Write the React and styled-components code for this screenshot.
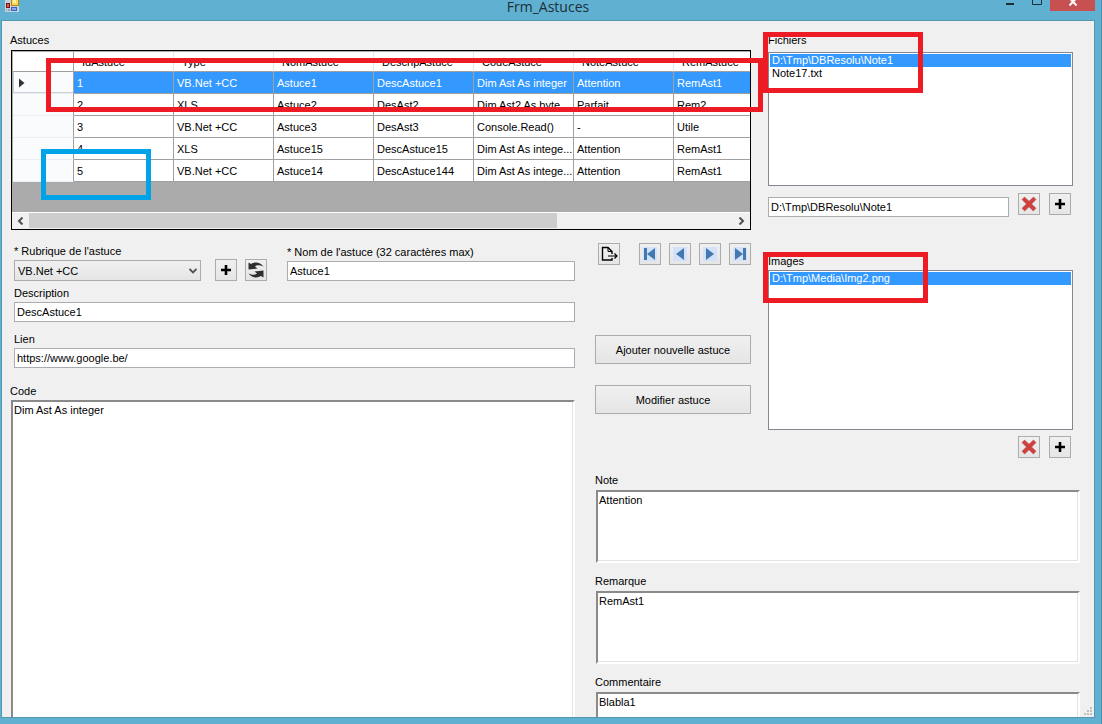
import React, { useState } from "react";
import styled, { createGlobalStyle } from "styled-components";

const GlobalStyle = createGlobalStyle`
  * {
    box-sizing: border-box;
  }

  body {
    margin: 0;
    background: #60b1d1;
    color: #000;
    font-family: "Liberation Sans", Arial, sans-serif;
    font-size: 11px;
    line-height: 14px;
  }

  button, input, select, textarea {
    font: inherit;
    color: inherit;
    margin: 0;
    border-radius: 0;
    outline: none;
  }
`;

const Window = styled.div`
  display: flex;
  flex-direction: column;
  min-height: 100vh;
  padding: 0 6px 6px 1px;
  border-right: 1px solid #4b93b2;
  background: #60b1d1;
`;

const TitleBar = styled.header`
  display: grid;
  grid-template-columns: 1fr auto 1fr;
  height: 20px;

  > svg {
    margin-left: 4px;
  }
`;

const Title = styled.h1`
  margin: 0;
  font-family: "Open Sans", "Noto Sans", sans-serif;
  font-size: 14px;
  font-weight: 400;
  line-height: 14px;
  color: #1d2f38;
`;

const WindowButtons = styled.div`
  display: flex;
  justify-content: flex-end;
  align-items: flex-start;
`;

const WindowButton = styled.button`
  display: flex;
  justify-content: center;
  width: ${(props) => (props.$close ? 45 : 27)}px;
  height: 11px;
  padding: 0;
  border: 0;
  background: ${(props) => (props.$close ? "#c75050" : "transparent")};
`;

const Form = styled.main`
  position: relative;
  flex-grow: 1;
  display: grid;
  grid-template-columns: minmax(0, 1fr) 156px 312px;
  grid-template-rows: auto auto 1fr;
  grid-template-areas:
    "records records files"
    "editor actions images"
    "editor notes notes";
  column-gap: 17px;
  padding: 12px 14px 0 8px;
  border: 1px solid #5396b0;
  background: #f0f0f0;
`;

const Section = styled.section`
  grid-area: ${(props) => props.$area};
  position: relative;
  display: flex;
  flex-direction: column;
  min-width: 0;
  padding-top: ${(props) => props.$top || 0}px;
`;

const Caption = styled.h2`
  margin: 0 0 ${(props) => props.$gap}px;
  font-size: 11px;
  font-weight: 400;
  line-height: 14px;
`;

const GridBox = styled.div`
  margin-left: 1px;
  border: 1px solid #000;
  background: #ababab;
`;

const GridScroll = styled.div`
  height: 161px;
  padding: 1px 0 0 1px;
  overflow: hidden;
`;

const Table = styled.table`
  table-layout: fixed;
  width: 760px;
  border-collapse: separate;
  border-spacing: 0;
  background: #fff;
`;

const HeadCell = styled.th`
  width: ${(props) => props.$width}px;
  height: 20px;
  padding: 0 0 0 8px;
  border-right: 1px solid #e3e8f0;
  border-bottom: 1px solid #a0a0a0;
  font-weight: 400;
  text-align: left;

  &:first-child {
    border-right-color: #a0a0a0;
  }
`;

const RowHead = styled.th`
  height: 22px;
  padding: 0 6px;
  border-right: 1px solid #a0a0a0;
  border-bottom: 1px solid #e9edf4;
  background: #fafbfd;
  text-align: left;
  line-height: 0;
`;

const Cell = styled.td`
  height: 22px;
  padding: 0 0 0 3px;
  border-right: 1px solid #a0a0a0;
  border-bottom: 1px solid #a0a0a0;
  overflow: hidden;
  white-space: nowrap;
`;

const Row = styled.tr`
  ${Cell} {
    background: ${(props) => (props.$selected ? "#3399ff" : "#fff")};
    color: ${(props) => (props.$selected ? "#fff" : "#000")};
  }

  ${RowHead} {
    box-shadow: ${(props) => (props.$selected ? "inset 1px -1px #c9cdd6" : "none")};
  }
`;

const ScrollBar = styled.div`
  display: flex;
  height: 17px;
  border-top: 1px solid #fff;
  background: #f0f0f0;
`;

const ScrollArrow = styled.button`
  display: flex;
  align-items: center;
  justify-content: center;
  width: 17px;
  padding: 0;
  border: 0;
  background: none;
`;

const ScrollTrack = styled.div`
  flex-grow: 1;
`;

const ScrollThumb = styled.div`
  width: 75%;
  height: 15px;
  background: #cdcdcd;
`;

const EditorFields = styled.div`
  display: flex;
  flex-direction: column;
  padding: 14px 3px 16px 4px;
`;

const FieldRow = styled.div`
  display: flex;
  align-items: flex-end;
  margin-bottom: 5px;
`;

const Field = styled.div`
  display: flex;
  flex-direction: column;
  gap: 2px;
  flex-grow: ${(props) => (props.$grow ? 1 : 0)};
  width: ${(props) => (props.$width ? `${props.$width}px` : "auto")};
  min-width: 0;

  & + & {
    margin-top: 10px;
  }
`;

const Label = styled.label`
  line-height: 14px;
  white-space: nowrap;
`;

const TextInput = styled.input`
  width: 100%;
  min-width: 0;
  height: 20px;
  padding: 0 2px;
  border: 1px solid #abadb3;
  background: #fff;
`;

const SelectWrap = styled.div`
  position: relative;
`;

const Select = styled.select`
  appearance: none;
  display: block;
  width: 100%;
  height: 21px;
  padding: 0 20px 0 3px;
  border: 1px solid #acacac;
  background: linear-gradient(#f0f0f0, #e5e5e5);
`;

const SelectArrow = styled.svg`
  position: absolute;
  top: 8px;
  right: 4px;
  pointer-events: none;
`;

const Button = styled.button`
  height: 29px;
  padding: 0;
  border: 1px solid #acacac;
  background: linear-gradient(#f0f0f0, #e5e5e5);
`;

const IconButton = styled(Button)`
  flex-shrink: 0;
  display: flex;
  align-items: center;
  justify-content: center;
  width: 22px;
  height: 22px;
`;

const FieldButtons = styled.div`
  display: flex;
  gap: 8px;
  margin: 0 20px 0 14px;
`;

const TextArea = styled.textarea`
  display: block;
  width: 100%;
  height: 73px;
  padding: 1px;
  border: 2px solid;
  border-color: #8a8a8a #fff #fff #8a8a8a;
  box-shadow: inset -1px -1px #e3e3e3;
  background: #fff;
  resize: none;
`;

// Fills what is left of the form and runs under its bottom edge
const OpenTextArea = styled(TextArea)`
  flex: 1 1 23px;
  height: auto;
  min-height: 0;
  border-bottom: 0;
  box-shadow: inset -1px 0 #e3e3e3;
`;

const CodeField = styled.div`
  flex-grow: 1;
  display: flex;
  flex-direction: column;
  gap: 2px;
  padding-right: 3px;

  ${TextArea} {
    width: calc(100% - 1px);
    margin-left: 1px;
  }
`;

const Toolbar = styled.div`
  display: flex;
  justify-content: space-between;
  gap: 8px;
  padding: 13px 0 70px 3px;
`;

const NavButtons = styled.div`
  display: flex;
  gap: 8px;
`;

const ActionButtons = styled.div`
  display: flex;
  flex-direction: column;
  gap: 21px;
`;

const ListBox = styled.ul`
  width: calc(100% - 7px);
  height: ${(props) => props.$height}px;
  margin: 0;
  padding: 1px;
  border: 1px solid #828790;
  background: #fff;
  list-style: none;
`;

const ListItem = styled.li`
  height: 13px;
  padding: 0 2px;
  line-height: 13px;
  background: ${(props) => (props.$selected ? "#3399ff" : "transparent")};
  color: ${(props) => (props.$selected ? "#fff" : "#000")};
`;

const ListTools = styled.div`
  display: flex;
  justify-content: flex-end;
  gap: 9px;
  padding: ${(props) => props.$top}px 9px 0 0;

  ${TextInput} {
    margin-top: 4px;
  }
`;

const Notes = styled(Section)`
  gap: 11px;
`;

const NoteField = styled.div`
  display: flex;
  flex-direction: column;
  gap: 3px;
  flex-grow: ${(props) => (props.$open ? 1 : 0)};

  ${TextArea} {
    width: calc(100% - 1px);
    margin-left: 1px;
  }
`;

const Highlight = styled.div`
  position: absolute;
  z-index: 1;
  top: ${(props) => props.$top}px;
  left: ${(props) => props.$left}px;
  width: ${(props) => props.$width};
  height: ${(props) => props.$height}px;
  border: 5px solid ${(props) => props.$color || "#ed1c24"};
  pointer-events: none;
`;

const Grip = styled.svg`
  position: absolute;
  right: 2px;
  bottom: 2px;
`;

const AppIcon = () => (
  <svg width="14" height="12" viewBox="0 0 14 12">
    <rect width="14" height="12" fill="#c3d3da" />
    <rect x="6" width="8" height="6" fill="#b58a1c" />
    <rect x="7" width="6" height="5" fill="#ffd84f" />
    <rect x="8" width="3" height="3" fill="#fff0a6" />
    <rect x="1" y="3" width="4" height="5" fill="#7c1c1a" />
    <rect x="2" y="4" width="2" height="3" fill="#e0564c" />
    <rect x="6" y="7" width="6" height="4" fill="#3d62c4" />
    <rect x="7" y="8" width="4" height="2" fill="#87a8f0" />
    <path d="M1 9h1v2H1zM3 9h2v2H3z" fill="#8fa2ac" />
  </svg>
);

const PlusIcon = () => (
  <svg width="10" height="10" viewBox="0 0 10 10">
    <path d="M5 0v10M0 5h10" stroke="#000" strokeWidth="2.6" />
  </svg>
);

const DeleteIcon = () => (
  <svg width="16" height="16" viewBox="0 0 16 16">
    <path
      d="M1 3.5L3.5 1 8 5.2 12.5 1 15 3.5 10.6 8 15 12.3 12.3 15 8 10.8 3.7 15 1 12.3 5.4 8z"
      fill="#cf4040"
      stroke="#b93a3a"
      strokeWidth="0.5"
    />
  </svg>
);

const RefreshIcon = () => (
  <svg width="18" height="18" viewBox="0 0 18 18">
    <path
      d="M1.500 1.500L4 3C7.500 0.800 13 0.800 16.500 5.500C12.500 3.800 9.500 4 8 5.500L10.500 7.500L1.500 8.500z"
      fill="#2f2f2f"
    />
    <path
      d="M16.500 16.500L14 15C10.500 17.200 5 17.200 1.500 12.500C5.500 14.200 8.500 14 10 12.500L7.500 10.500L16.500 9.500z"
      fill="#2f2f2f"
    />
  </svg>
);

const ExportIcon = () => (
  <svg width="17" height="17" viewBox="0 0 17 17" fill="none" stroke="#000">
    <path d="M11 8V5.500L7 1.500H1.500V14H11V12" strokeWidth="1.400" />
    <path d="M7 1.500V5.500H11" />
    <path d="M7 10H16M13.500 7.500L16 10L13.500 12.500" strokeWidth="1.200" />
  </svg>
);

const NAV_SHAPES = {
  first: "M2 2h3v12H2zM13 2v12L5 8z",
  previous: "M12 2v12L4 8z",
  next: "M4 2v12L12 8z",
  last: "M3 2v12L11 8zM11 2h3v12h-3z",
};

const NavIcon = ({ name }) => (
  <svg width="16" height="16" viewBox="0 0 16 16">
    <rect x="1" y="1" width="14" height="14" fill="#d3e2fa" />
    <path d={NAV_SHAPES[name]} fill="#4478b0" />
  </svg>
);

const ChevronIcon = ({ right }) => (
  <svg width="7" height="8" viewBox="0 0 7 8" fill="none">
    <path
      d={right ? "M1.500 0.500L5 4L1.500 7.500" : "M5.500 0.500L2 4L5.500 7.500"}
      stroke="#505050"
      strokeWidth="2"
    />
  </svg>
);

const columns = [
  ["IdAstuce", 100],
  ["Type", 100],
  ["NomAstuce", 100],
  ["DescripAstuce", 100],
  ["CodeAstuce", 100],
  ["NoteAstuce", 100],
  ["RemAstuce", 100],
];

const astuces = [
  ["1", "VB.Net +CC", "Astuce1", "DescAstuce1", "Dim Ast As integer", "Attention", "RemAst1"],
  ["2", "XLS", "Astuce2", "DesAst2", "Dim Ast2 As byte", "Parfait", "Rem2"],
  ["3", "VB.Net +CC", "Astuce3", "DesAst3", "Console.Read()", "-", "Utile"],
  ["4", "XLS", "Astuce15", "DescAstuce15", "Dim Ast As intege...", "Attention", "RemAst1"],
  ["5", "VB.Net +CC", "Astuce14", "DescAstuce144", "Dim Ast As intege...", "Attention", "RemAst1"],
];

const AstuceGrid = () => {
  const [selected, setSelected] = useState("1");

  return (
    <GridBox>
      <GridScroll>
        <Table>
          <thead>
            <tr>
              <HeadCell $width={61} aria-label="Sélection" />
              {columns.map(([name, width]) => (
                <HeadCell key={name} $width={width}>
                  {name}
                </HeadCell>
              ))}
            </tr>
          </thead>
          <tbody>
            {astuces.map((astuce) => (
              <Row
                key={astuce[0]}
                $selected={astuce[0] === selected}
                onClick={() => setSelected(astuce[0])}
              >
                <RowHead scope="row">
                  {astuce[0] === selected && (
                    <svg width="6" height="10" viewBox="0 0 6 10">
                      <path d="M0 0.500L5.500 5L0 9.500z" fill="#333" />
                    </svg>
                  )}
                </RowHead>
                {astuce.map((value, index) => (
                  <Cell key={index}>{value}</Cell>
                ))}
              </Row>
            ))}
          </tbody>
        </Table>
      </GridScroll>
      <ScrollBar>
        <ScrollArrow aria-label="Gauche">
          <ChevronIcon />
        </ScrollArrow>
        <ScrollTrack>
          <ScrollThumb />
        </ScrollTrack>
        <ScrollArrow aria-label="Droite">
          <ChevronIcon right />
        </ScrollArrow>
      </ScrollBar>
    </GridBox>
  );
};

const PathList = ({ label, items, height }) => {
  const [selected, setSelected] = useState(items[0]);

  return (
    <ListBox role="listbox" aria-label={label} $height={height}>
      {items.map((item) => (
        <ListItem
          key={item}
          role="option"
          aria-selected={item === selected}
          $selected={item === selected}
          onClick={() => setSelected(item)}
        >
          {item}
        </ListItem>
      ))}
    </ListBox>
  );
};

const App = () => {
  return (
    <>
      <GlobalStyle />
      <Window>
        <TitleBar>
          <AppIcon />
          <Title>Frm_Astuces</Title>
          <WindowButtons>
            <WindowButton aria-label="Réduire">
              <svg width="8" height="6" viewBox="0 0 8 6">
                <path d="M0 4h8" stroke="#1d2f38" strokeWidth="2" />
              </svg>
            </WindowButton>
            <WindowButton aria-label="Agrandir">
              <svg width="10" height="6" viewBox="0 0 10 6">
                <path d="M0.500 0V4.500H9.500V0" fill="none" stroke="#1d2f38" />
              </svg>
            </WindowButton>
            <WindowButton $close aria-label="Fermer">
              <svg width="8" height="6" viewBox="0 0 8 6">
                <path d="M0.500 -2L7.500 5.500M7.500 -2L0.500 5.500" stroke="#fff" strokeWidth="2" />
              </svg>
            </WindowButton>
          </WindowButtons>
        </TitleBar>

        <Form>
          <Section $area="records">
            <Caption $gap={3}>Astuces</Caption>
            <AstuceGrid />
            <Highlight $top={25} $left={36} $width="calc(100% - 24px)" $height={54} />
            <Highlight $top={116} $left={31} $width="110px" $height={51} $color="#00a2e8" />
          </Section>

          <Section $area="files">
            <Caption $gap={5}>Fichiers</Caption>
            <PathList
              label="Fichiers"
              items={["D:\\Tmp\\DBResolu\\Note1", "Note17.txt"]}
              height={134}
            />
            <ListTools $top={7}>
              <TextInput aria-label="Chemin du fichier" defaultValue="D:\Tmp\DBResolu\Note1" />
              <IconButton aria-label="Supprimer le fichier">
                <DeleteIcon />
              </IconButton>
              <IconButton aria-label="Ajouter un fichier">
                <PlusIcon />
              </IconButton>
            </ListTools>
            <Highlight $top={-1} $left={-5} $width="160px" $height={61} />
          </Section>

          <Section $area="editor">
            <EditorFields>
              <FieldRow>
                <Field $width={187}>
                  <Label htmlFor="rubrique">* Rubrique de l'astuce</Label>
                  <SelectWrap>
                    <Select id="rubrique" defaultValue="VB.Net +CC">
                      <option>VB.Net +CC</option>
                      <option>XLS</option>
                    </Select>
                    <SelectArrow width="8" height="6" viewBox="0 0 8 6">
                      <path d="M0.500 1L4 4.500L7.500 1" fill="none" stroke="#505050" strokeWidth="1.800" />
                    </SelectArrow>
                  </SelectWrap>
                </Field>
                <FieldButtons>
                  <IconButton aria-label="Ajouter une rubrique">
                    <PlusIcon />
                  </IconButton>
                  <IconButton aria-label="Actualiser">
                    <RefreshIcon />
                  </IconButton>
                </FieldButtons>
                <Field $grow>
                  <Label htmlFor="nom">* Nom de l'astuce (32 caractères max)</Label>
                  <TextInput id="nom" maxLength={32} defaultValue="Astuce1" />
                </Field>
              </FieldRow>
              <Field>
                <Label htmlFor="description">Description</Label>
                <TextInput id="description" defaultValue="DescAstuce1" />
              </Field>
              <Field>
                <Label htmlFor="lien">Lien</Label>
                <TextInput id="lien" defaultValue="https://www.google.be/" />
              </Field>
            </EditorFields>
            <CodeField>
              <Label htmlFor="code">Code</Label>
              <OpenTextArea id="code" defaultValue="Dim Ast As integer" />
            </CodeField>
          </Section>

          <Section $area="actions">
            <Toolbar>
              <IconButton aria-label="Exporter">
                <ExportIcon />
              </IconButton>
              <NavButtons>
                <IconButton aria-label="Premier">
                  <NavIcon name="first" />
                </IconButton>
                <IconButton aria-label="Précédent">
                  <NavIcon name="previous" />
                </IconButton>
                <IconButton aria-label="Suivant">
                  <NavIcon name="next" />
                </IconButton>
                <IconButton aria-label="Dernier">
                  <NavIcon name="last" />
                </IconButton>
              </NavButtons>
            </Toolbar>
            <ActionButtons>
              <Button>Ajouter nouvelle astuce</Button>
              <Button>Modifier astuce</Button>
            </ActionButtons>
          </Section>

          <Section $area="images" $top={24}>
            <Caption $gap={2}>Images</Caption>
            <PathList label="Images" items={["D:\\Tmp\\Media\\Img2.png"]} height={160} />
            <ListTools $top={6}>
              <IconButton aria-label="Supprimer l'image">
                <DeleteIcon />
              </IconButton>
              <IconButton aria-label="Ajouter une image">
                <PlusIcon />
              </IconButton>
            </ListTools>
            <Highlight $top={22} $left={-5} $width="165px" $height={51} />
          </Section>

          <Notes $area="notes" $top={15}>
            <NoteField>
              <Label htmlFor="note">Note</Label>
              <TextArea id="note" defaultValue="Attention" />
            </NoteField>
            <NoteField>
              <Label htmlFor="remarque">Remarque</Label>
              <TextArea id="remarque" defaultValue="RemAst1" />
            </NoteField>
            <NoteField $open>
              <Label htmlFor="commentaire">Commentaire</Label>
              <OpenTextArea id="commentaire" defaultValue="Blabla1" />
            </NoteField>
          </Notes>

          <Grip width="8" height="8" viewBox="0 0 8 8">
            <path
              d="M6 0h2v2H6zM3 3h2v2H3zM6 3h2v2H6zM0 6h2v2H0zM3 6h2v2H3zM6 6h2v2H6z"
              fill="#bfbfbf"
            />
          </Grip>
        </Form>
      </Window>
    </>
  );
};

export default App;
